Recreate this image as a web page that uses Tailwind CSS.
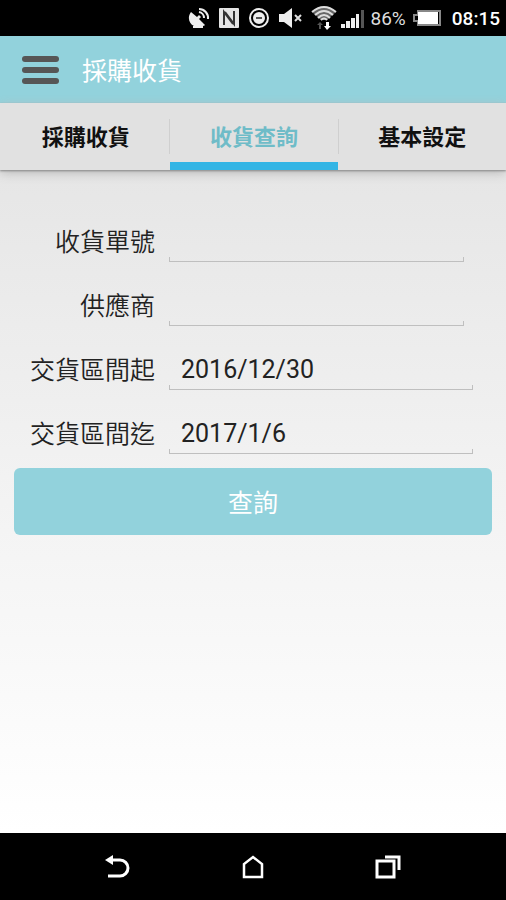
<!DOCTYPE html>
<html lang="zh-Hant">

<head>
  <meta charset="UTF-8" />
  <meta name="viewport" content="width=device-width, initial-scale=1.0" />
  <title>採購收貨</title>
  <script src="https://cdn.jsdelivr.net/npm/@tailwindcss/browser@4"></script>
</head>

<body class="flex min-h-screen flex-col bg-black font-[Roboto,'Noto_Sans_CJK_TC',sans-serif] text-[#222]">
  <!-- Status bar -->
  <div class="flex h-9 items-center justify-end bg-black pr-[6px] text-white">
    <svg class="mr-2 size-[22px]" viewBox="0 0 22 22" fill="none" stroke="#eee" stroke-width="2">
      <path d="M3 5 C-1 10 1 17 6 19 H5 V21 H15 V19 C16 19 17 18 17 18 L11 12 L13 10 L11 8 L9 10 Z" fill="#eee" stroke="none" />
      <path d="M11 5 A6 6 0 0 1 16 11 M11 2 A9 9 0 0 1 20 12" />
    </svg>
    <svg class="mr-2 size-[22px]" viewBox="0 0 22 22">
      <rect x="1" y="1" width="20" height="20" rx="1" fill="#e4e4e4" />
      <path d="M6 18 V5 L15 17 M16 4 V17 L7 5" fill="none" stroke="#333" stroke-width="2" />
    </svg>
    <svg class="mr-2 size-[22px]" viewBox="0 0 22 22" fill="none" stroke="#eee" stroke-width="2">
      <circle cx="11" cy="11" r="9" />
      <circle cx="11" cy="11" r="5" fill="#eee" />
      <path d="M8 11 H14" stroke="#555" />
    </svg>
    <svg class="mr-2 h-[22px] w-[25px]" viewBox="0 0 25 22">
      <path d="M1 7 H6 L14 1 V21 L6 15 H1 Z" fill="#eee" />
      <path d="M17 8 L23 14 M23 8 L17 14" stroke="#ddd" stroke-width="2" />
    </svg>
    <svg class="mr-1 h-[26px] w-[26px]" viewBox="0 0 26 26" fill="none">
      <path d="M1 7 Q13 -3 25 7 L16 15 H10 Z" fill="#666" />
      <path d="M1 7 Q13 -3 25 7 M4 10 Q13 2 22 10 M7 13 Q13 7 19 13 M10 15 Q13 12 16 15" stroke="#ddd" stroke-width="2" />
      <path d="M9 17 L12 20 H10 V24 H8 V20 H6 Z" fill="#555" />
      <path d="M15 17 H18 V21 H20 L16 25 L13 21 H15 Z" fill="#fff" />
    </svg>
    <svg class="mr-[7px] h-5 w-[23px]" viewBox="0 0 23 20" fill="#eee">
      <path d="M0 16 H4 V20 H0 Z M5 13 H9 V20 H5 Z M10 10 H14 V20 H10 Z M15 6 H18 V20 H15 Z" />
      <path d="M20 2 H23 V20 H20 Z" fill="#555" />
    </svg>
    <span class="mr-[7px] pt-[2px] text-[19px] text-[#ddd]">86%</span>
    <svg class="mr-[11px] h-4 w-[28px]" viewBox="0 0 28 16">
      <path d="M5 1 H27 V15 H5 V11 H1 V5 H5 Z" fill="none" stroke="#888" stroke-width="2" />
      <rect x="5" y="2" width="20" height="12" fill="#fff" />
    </svg>
    <span class="pt-[2px] text-[19px] font-medium">08:15</span>
  </div>

  <!-- Header -->
  <header class="flex h-[67px] items-center bg-[#92d2dc] px-[21px]">
    <button type="button" aria-label="選單" class="mr-[22px]">
      <svg class="h-[30px] w-[39px]" viewBox="0 0 39 30" fill="#565656">
        <rect x="1" y="1" width="37" height="6" rx="3" />
        <rect x="1" y="12" width="37" height="6" rx="3" />
        <rect x="1" y="23" width="37" height="6" rx="3" />
      </svg>
    </button>
    <h1 class="pt-1 text-[25px] font-normal text-white">採購收貨</h1>
  </header>

  <!-- Tabs -->
  <nav class="relative z-10 flex h-[67px] bg-[#e1e1e1] pl-[2px] text-[22px] font-bold text-[#111] shadow-[0_1px_2px_#888,0_3px_10px_#bbb]">
    <a href="#" class="flex flex-1 items-center justify-center pt-[2px]">採購收貨</a>
    <span class="my-4 w-px bg-[#cfcfcf]"></span>
    <a href="#" class="flex flex-1 items-center justify-center border-y-8 border-t-transparent border-b-[#33b5e5] pt-[2px] text-[#6fbcc8]">收貨查詢</a>
    <span class="my-4 w-px bg-[#cfcfcf]"></span>
    <a href="#" class="flex flex-1 items-center justify-center pt-[2px]">基本設定</a>
  </nav>

  <!-- Search form -->
  <main class="flex-1 bg-linear-to-b from-[#e6e6e6] via-[#f3f3f3] to-white pt-7">
    <form>
      <div class="flex h-16 items-end">
        <label for="receipt-no" class="w-[155px] pb-px text-right text-[25px] font-[350]">收貨單號</label>
        <div class="mr-[42px] ml-[14px] flex-1">
          <input id="receipt-no" type="text" class="block h-11 w-full px-3 pt-3 text-[25px] outline-none" />
          <div class="h-[5px] border border-t-0 border-[#bfbfbf]"></div>
        </div>
      </div>
      <div class="flex h-16 items-end">
        <label for="supplier" class="w-[155px] pb-px text-right text-[25px] font-[350]">供應商</label>
        <div class="mr-[42px] ml-[14px] flex-1">
          <input id="supplier" type="text" class="block h-11 w-full px-3 pt-3 text-[25px] outline-none" />
          <div class="h-[5px] border border-t-0 border-[#bfbfbf]"></div>
        </div>
      </div>
      <div class="flex h-16 items-end">
        <label for="date-from" class="w-[155px] pb-px text-right text-[25px] font-[350]">交貨區間起</label>
        <div class="mr-[33px] ml-[14px] flex-1">
          <input id="date-from" type="text" value="2016/12/30" class="block h-11 w-full px-3 pt-3 text-[25px] outline-none" />
          <div class="h-[5px] border border-t-0 border-[#bfbfbf]"></div>
        </div>
      </div>
      <div class="flex h-16 items-end">
        <label for="date-to" class="w-[155px] pb-px text-right text-[25px] font-[350]">交貨區間迄</label>
        <div class="mr-[33px] ml-[14px] flex-1">
          <input id="date-to" type="text" value="2017/1/6" class="block h-11 w-full px-3 pt-3 text-[25px] outline-none" />
          <div class="h-[5px] border border-t-0 border-[#bfbfbf]"></div>
        </div>
      </div>
      <div class="px-[14px] pt-[14px]">
        <button type="button" class="h-[67px] w-full rounded-md bg-[#92d2dc] pt-1 text-[25px] text-white">查詢</button>
      </div>
    </form>
  </main>

  <!-- Navigation bar -->
  <div class="flex h-[67px] items-center justify-center gap-[109px] bg-black">
    <button type="button" aria-label="返回">
      <svg class="size-[26px]" viewBox="0 0 26 26" fill="none" stroke="#fff" stroke-width="3">
        <path d="M6 6 H15 A8 8 0 0 1 15 22 H3" />
        <path d="M0 6 L8 1 V11 Z" fill="#fff" stroke="none" />
      </svg>
    </button>
    <button type="button" aria-label="主畫面">
      <svg class="size-[26px]" viewBox="0 0 26 26" fill="none" stroke="#fff" stroke-width="2.5">
        <path d="M4 23 V10 L13 3 L22 10 V23 Z" />
      </svg>
    </button>
    <button type="button" aria-label="最近使用">
      <svg class="size-[26px]" viewBox="0 0 26 26" fill="none" stroke="#fff" stroke-width="3">
        <rect x="2" y="7" width="17" height="16" />
        <path d="M10 3 H24 V16" />
      </svg>
    </button>
  </div>
</body>

</html>
